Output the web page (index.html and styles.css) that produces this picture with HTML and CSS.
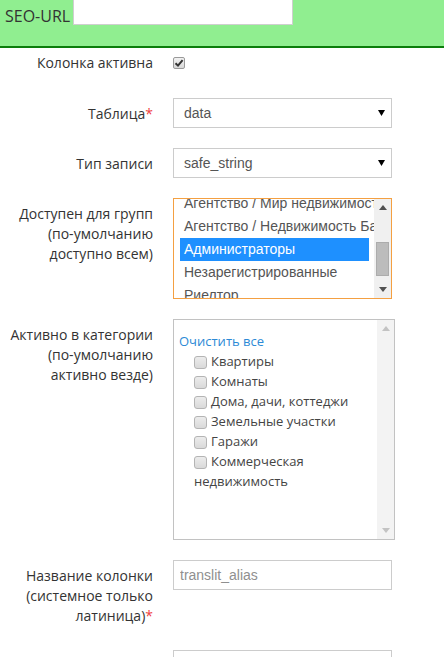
FILE: index.html
```html
<!DOCTYPE html>
<html lang="ru">
<head>
<meta charset="utf-8">
<title>Form</title>
<link rel="stylesheet" href="styles.css">
</head>
<body>
<div class="seo">
  <span class="seo-label">SEO-URL</span>
  <input class="seo-input" type="text">
</div>
<div class="form">
  <div class="row row-check">
    <div class="label label-plain">Колонка активна</div>
    <div class="control">
      <span class="checkbox checked"><svg width="10" height="10" viewBox="0 0 10 10"><path d="M1.5 5.2 L4 7.6 L8.6 2.2" fill="none" stroke="#333" stroke-width="2"/></svg></span>
    </div>
  </div>
  <div class="row">
    <div class="label">Таблица<span class="req">*</span></div>
    <div class="control">
      <div class="select"><span>data</span><svg width="7" height="6" viewBox="0 0 7 6"><path d="M0 0 H7 L3.5 6 Z" fill="#000"/></svg></div>
    </div>
  </div>
  <div class="row">
    <div class="label">Тип записи</div>
    <div class="control">
      <div class="select"><span>safe_string</span><svg width="7" height="6" viewBox="0 0 7 6"><path d="M0 0 H7 L3.5 6 Z" fill="#000"/></svg></div>
    </div>
  </div>
  <div class="row">
    <div class="label">Доступен для групп<br>(по-умолчанию<br>доступно всем)</div>
    <div class="control">
      <div class="listbox">
        <div class="options">
          <div class="opt">Агентство / Мир недвижимости</div>
          <div class="opt">Агентство / Недвижимость Барнаула</div>
          <div class="opt selected">Администраторы</div>
          <div class="opt">Незарегистрированные</div>
          <div class="opt">Риелтор</div>
        </div>
        <div class="sbar">
          <div class="sbtn"><svg width="8" height="5" viewBox="0 0 8 5"><path d="M0 5 L4 0 L8 5 Z" fill="#505050"/></svg></div>
          <div class="strack"><div class="thumb"></div></div>
          <div class="sbtn"><svg width="8" height="5" viewBox="0 0 8 5"><path d="M0 0 L4 5 L8 0 Z" fill="#505050"/></svg></div>
        </div>
      </div>
    </div>
  </div>
  <div class="row">
    <div class="label">Активно в категории<br>(по-умолчанию<br>активно везде)</div>
    <div class="control">
      <div class="catbox">
        <div class="catlist">
          <a class="clear">Очистить все</a>
          <div class="item"><span class="cb"></span>Квартиры</div>
          <div class="item"><span class="cb"></span>Комнаты</div>
          <div class="item"><span class="cb"></span>Дома, дачи, коттеджи</div>
          <div class="item"><span class="cb"></span>Земельные участки</div>
          <div class="item"><span class="cb"></span>Гаражи</div>
          <div class="item"><span class="cb"></span>Коммерческая недвижимость</div>
        </div>
        <div class="sbar sbar-light">
          <div class="sbtn"><svg width="8" height="5" viewBox="0 0 8 5"><path d="M0 5 L4 0 L8 5 Z" fill="#c3c3c3"/></svg></div>
          <div class="strack"></div>
          <div class="sbtn"><svg width="8" height="5" viewBox="0 0 8 5"><path d="M0 0 L4 5 L8 0 Z" fill="#c3c3c3"/></svg></div>
        </div>
      </div>
    </div>
  </div>
  <div class="row">
    <div class="label label-tall">Название колонки<br>(системное только<br>латиница)<span class="req">*</span></div>
    <div class="control">
      <input class="text" type="text" placeholder="translit_alias">
    </div>
  </div>
  <div class="row">
    <div class="label"></div>
    <div class="control">
      <input class="text" type="text">
    </div>
  </div>
</div>
</body>
</html>
```
FILE: styles.css
```css
html, body {
  margin: 0;
  padding: 0;
}
body {
  font-family: "Open Sans", "DejaVu Sans", sans-serif;
  color: #333;
  background: #fff;
  width: 444px;
  overflow: hidden;
}
.seo {
  background: #90ee90;
  border-bottom: 2px solid #0b7d0b;
  height: 46px;
  display: flex;
  align-items: flex-start;
  padding-left: 5px;
}
.seo-label {
  font-size: 16px;
  line-height: 22px;
  margin-top: 5px;
}
.seo-input {
  width: 220px;
  height: 26px;
  margin: -1px 0 0 3px;
  border: 1px solid #cfcfcf;
  background: #fff;
  box-sizing: border-box;
  padding: 0;
}
.form {
  padding-top: 5px;
}
.row {
  display: flex;
  align-items: flex-start;
  margin-bottom: 20px;
}
.row-check {
  margin-bottom: 25px;
}
.label {
  width: 153px;
  flex: none;
  text-align: right;
  font-size: 14px;
  line-height: 20px;
  padding-top: 6px;
  color: #333;
}
.label-plain {
  padding-top: 0;
}
.label-tall {
  padding-bottom: 4px;
}
.req {
  color: #f0413d;
}
.control {
  margin-left: 20px;
  width: 219px;
  flex: none;
}
.checkbox {
  display: flex;
  align-items: center;
  justify-content: center;
  width: 12px;
  height: 12px;
  margin-top: 4px;
  border: 1px solid #9a9a9a;
  border-radius: 2px;
  background: linear-gradient(#f2f2f2, #d8d8d8);
  box-sizing: border-box;
}
.select {
  height: 30px;
  border: 1px solid #cccccc;
  box-sizing: border-box;
  display: flex;
  align-items: center;
  justify-content: space-between;
  padding: 0 6px 0 10px;
  font-family: "Liberation Sans", Arial, sans-serif;
  font-size: 14px;
  color: #555;
  background: #fff;
}
.listbox {
  height: 101px;
  border: 1px solid #f4a042;
  box-sizing: border-box;
  display: flex;
  overflow: hidden;
  background: #fff;
}
.options {
  flex: 1;
  min-width: 0;
  padding: 0 0 0 6px;
  margin-top: -7px;
  font-family: "Liberation Sans", Arial, sans-serif;
  font-size: 14px;
  color: #555;
}
.opt {
  height: 23px;
  line-height: 23px;
  padding-left: 4px;
  white-space: nowrap;
  overflow: hidden;
}
.opt.selected {
  background: linear-gradient(to right, #1e90ff calc(100% - 5px), transparent 0);
  color: #fff;
}
.sbar {
  width: 17px;
  flex: none;
  background: #f0f0f0;
  display: flex;
  flex-direction: column;
}
.sbtn {
  height: 17px;
  display: flex;
  align-items: center;
  justify-content: center;
}
.strack {
  flex: 1;
}
.thumb {
  width: 13px;
  height: 34px;
  margin: 26px auto 0;
  background: #bcbcbc;
  border: 1px solid #acacac;
  box-sizing: border-box;
}
.catbox {
  width: 222px;
  height: 221px;
  border: 1px solid #c2c2c2;
  box-sizing: border-box;
  display: flex;
  background: #fff;
}
.sbar-light {
  background: #f3f3f3;
}
.catlist {
  flex: 1;
  padding: 11px 5px 0 5px;
  font-size: 13px;
  line-height: 20px;
  color: #444;
}
.clear {
  display: block;
  color: #2d8ad6;
  text-decoration: none;
}
.item {
  padding-left: 15px;
}
.cb {
  display: inline-block;
  width: 13px;
  height: 13px;
  margin-right: 4px;
  vertical-align: -3px;
  border: 1px solid #b4b4b4;
  border-radius: 3px;
  background: linear-gradient(#ececec, #d9d9d9);
  box-sizing: border-box;
}
.text {
  display: block;
  width: 219px;
  height: 30px;
  border: 1px solid #cccccc;
  box-sizing: border-box;
  padding: 0 6px;
  margin: 0;
  font-family: "Liberation Sans", Arial, sans-serif;
  font-size: 14px;
  color: #555;
  background: #fff;
  outline: none;
}
.text::placeholder {
  color: #8f8f8f;
}
```
